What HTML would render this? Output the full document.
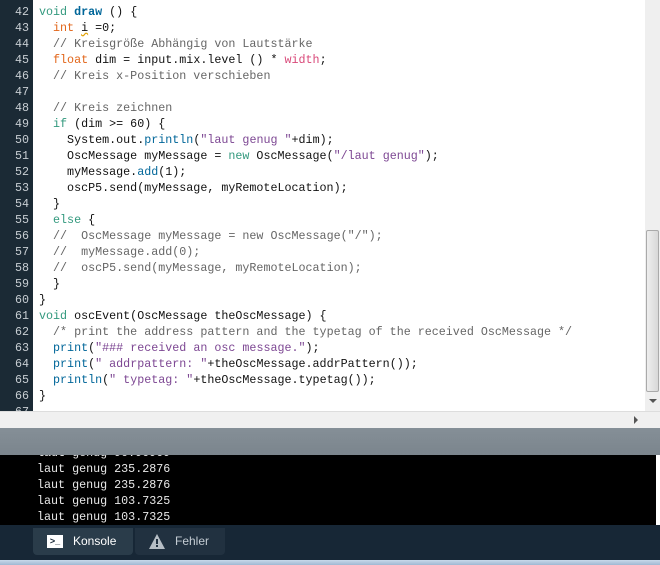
<!DOCTYPE html>
<html><head><style>
body{margin:0;width:660px;height:565px;overflow:hidden;background:#fff;position:relative;font-family:"Liberation Mono",monospace;}
#gut{position:absolute;left:0;top:0;width:33px;height:411px;background:#1b2a35;}
#code{position:absolute;left:33px;top:0;width:612px;height:411px;background:#fff;overflow:hidden;}
.ln{position:absolute;left:0;width:29px;text-align:right;color:#c8ced3;font-size:11.7px;line-height:16px;}
pre{margin:0;font-family:"Liberation Mono",monospace;font-size:11.7px;line-height:16px;color:#111;}
.k{color:#e2661a}.g{color:#33997e}.b{color:#006699}.bb{color:#006699;font-weight:bold}.p{color:#d94a7a}.c{color:#666}.s{color:#7d4793}
#vs{position:absolute;left:645px;top:0;width:15px;height:411px;background:#efefef;}
#thumb{position:absolute;left:646px;top:230px;width:13px;height:162px;background:linear-gradient(90deg,#eee,#d8d8d8);border:1px solid #aaa;box-sizing:border-box;border-radius:2px;}
#hs{position:absolute;left:0;top:411px;width:660px;height:17px;background:#f0f0f0;border-top:1px solid #ddd;box-sizing:border-box;}
#band{position:absolute;left:0;top:428px;width:660px;height:27px;background:linear-gradient(#858f97,#7b858d);}
#con{position:absolute;left:0;top:455px;width:656px;height:70px;background:#000;overflow:hidden;}
#con pre{color:#e8e8e8;position:absolute;left:37px;top:-10px;}
#tabs{position:absolute;left:0;top:525px;width:660px;height:35px;background:#172736;}
.tab{position:absolute;top:3px;height:27px;border-radius:0 0 4px 4px;color:#fff;font-family:"Liberation Sans",sans-serif;font-size:12px;line-height:27px;}
#bot{position:absolute;left:0;top:560px;width:660px;height:5px;background:linear-gradient(#c9d9ea,#9fb8d3);}
</style></head><body>
<div id="gut"><div class="ln" style="top:4px"><pre style="color:#c8ced3;text-align:right">42
43
44
45
46
47
48
49
50
51
52
53
54
55
56
57
58
59
60
61
62
63
64
65
66
67</pre></div></div>
<div id="code"><pre style="position:absolute;left:6px;top:4px"><span class="g">void</span> <span class="bb">draw</span> () {
  <span class="k">int</span> <span style="text-decoration:underline wavy #e2a000">i</span> =0;
  <span class="c">// Kreisgröße Abhängig von Lautstärke</span>
  <span class="k">float</span> dim = input.mix.level () * <span class="p">width</span>;
  <span class="c">// Kreis x-Position verschieben</span>

  <span class="c">// Kreis zeichnen</span>
  <span class="g">if</span> (dim &gt;= 60) {
    System.out.<span class="b">println</span>(<span class="s">"laut genug "</span>+dim);
    OscMessage myMessage = <span class="g">new</span> OscMessage(<span class="s">"/laut genug"</span>);
    myMessage.<span class="b">add</span>(1);
    oscP5.send(myMessage, myRemoteLocation);
  }
  <span class="g">else</span> {
  <span class="c">//  OscMessage myMessage = new OscMessage("/");</span>
  <span class="c">//  myMessage.add(0);</span>
  <span class="c">//  oscP5.send(myMessage, myRemoteLocation);</span>
  }
}
<span class="g">void</span> oscEvent(OscMessage theOscMessage) {
  <span class="c">/* print the address pattern and the typetag of the received OscMessage */</span>
  <span class="b">print</span>(<span class="s">"### received an osc message."</span>);
  <span class="b">print</span>(<span class="s">" addrpattern: "</span>+theOscMessage.addrPattern());
  <span class="b">println</span>(<span class="s">" typetag: "</span>+theOscMessage.typetag());
}</pre></div>
<div id="vs"></div><div id="thumb"></div>
<div style="position:absolute;left:649px;top:399px;width:0;height:0;border-left:4px solid transparent;border-right:4px solid transparent;border-top:4px solid #555"></div>
<div id="hs"><div style="position:absolute;left:634px;top:4px;width:0;height:0;border-top:4px solid transparent;border-bottom:4px solid transparent;border-left:4px solid #555"></div></div>
<div id="band"></div>
<div id="con"><pre>laut genug 90.90909
laut genug 235.2876
laut genug 235.2876
laut genug 103.7325
laut genug 103.7325</pre></div>
<div style="position:absolute;left:656px;top:455px;width:4px;height:70px;background:#fff"></div>
<div id="tabs">
<div class="tab" style="left:33px;width:100px;background:#2a3c4a"><span style="position:absolute;left:14px;top:7px;width:16px;height:13px;background:#fff;color:#172736;font-size:9px;line-height:13px;font-weight:bold;text-align:center">&gt;_</span><span style="position:absolute;left:40px">Konsole</span></div>
<div class="tab" style="left:135px;width:90px;background:#213140;color:#c4ccd3"><svg style="position:absolute;left:14px;top:6px" width="16" height="15" viewBox="0 0 16 15"><path d="M8 0L16 15H0Z" fill="#b6bec5"/><rect x="7" y="5" width="2" height="5" fill="#213140"/><rect x="7" y="11" width="2" height="2" fill="#213140"/></svg><span style="position:absolute;left:40px">Fehler</span></div>
</div>
<div id="bot"></div>
</body></html>
